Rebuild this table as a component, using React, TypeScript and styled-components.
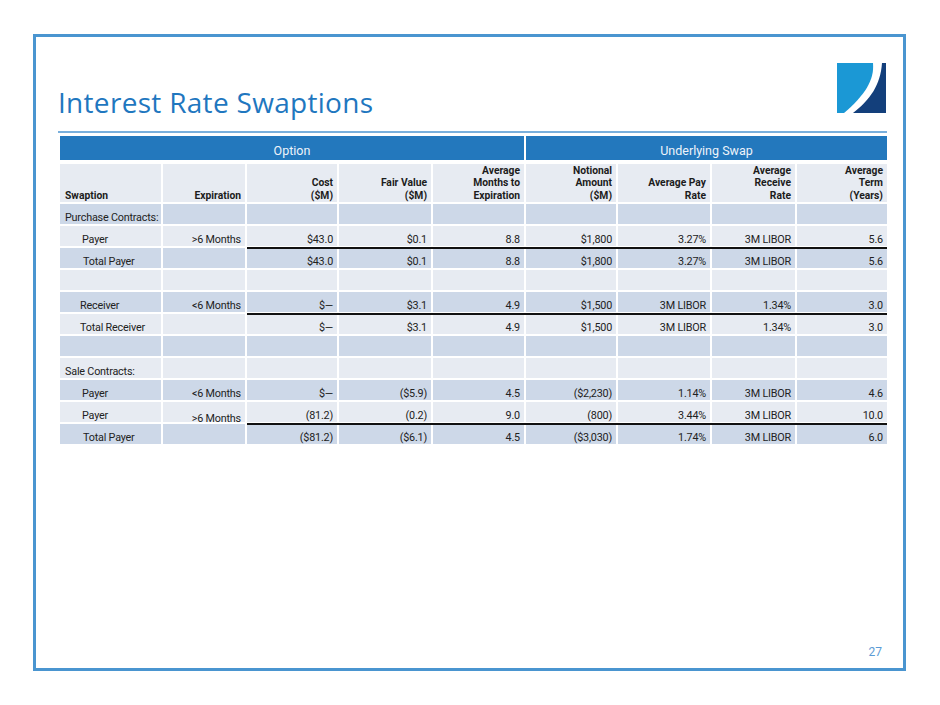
import React from "react";
import styled, { createGlobalStyle } from "styled-components";

const Global = createGlobalStyle`
  html, body { margin: 0; padding: 0; background: #ffffff; }
  body { font-family: Roboto, "Liberation Sans", sans-serif; }
`;

const Frame = styled.div`
  box-sizing: border-box;
  margin: 34px 0 0 33px;
  width: 873px;
  height: 637px;
  border: 3px solid #4a95d0;
  display: flex;
  flex-direction: column;
`;

const Content = styled.div`
  padding: 0 16px 0 22px;
  display: flex;
  flex-direction: column;
`;

const Header = styled.div`
  box-sizing: border-box;
  height: 96px;
  padding: 0 1px 15px 0;
  border-bottom: 2px solid #79afdc;
  display: flex;
  align-items: flex-end;
  justify-content: space-between;
`;

const Title = styled.h1`
  margin: 0;
  font-family: "Open Sans", "Liberation Sans", sans-serif;
  font-weight: 400;
  font-size: 28px;
  letter-spacing: 0.3px;
  line-height: 28px;
  color: #1f77bf;
`;

const LogoBox = styled.svg`
  display: block;
  width: 50px;
  height: 51px;
  margin-bottom: 3px;
`;

const Table = styled.div`
  margin: 3px 0 0 2px;
  display: grid;
  grid-template-columns: 101px 82px 90px 92px 91px 90px 92px 83px 90px;
  column-gap: 2px;
  row-gap: 2px;
`;

const BandCell = styled.div<{ $from: number; $to: number }>`
  grid-column: ${(p) => p.$from} / ${(p) => p.$to};
  height: 24px;
  margin-bottom: 2px;
  background: #2378bd;
  color: #eef3fa;
  font-size: 12.5px;
  line-height: 14px;
  display: flex;
  align-items: flex-end;
  justify-content: center;
  padding-bottom: 2px;
  box-sizing: border-box;
`;

const HeadCell = styled.div<{ $left?: boolean }>`
  height: 38px;
  box-sizing: border-box;
  background: #e7ebf2;
  color: #1c1c1c;
  font-weight: 700;
  font-size: 10.3px;
  line-height: 12.3px;
  display: flex;
  flex-direction: column;
  justify-content: flex-end;
  text-align: ${(p) => (p.$left ? "left" : "right")};
  padding: 0 4px 0 ${(p) => (p.$left ? "5px" : "0")};
`;

const Cell = styled.div<{ $dark: boolean; $left?: boolean; $indent?: number; $rule?: boolean; $last?: boolean }>`
  position: relative;
  height: 20px;
  box-sizing: border-box;
  background: ${(p) => (p.$dark ? "#cdd8e8" : "#e7ebf2")};
  color: #222222;
  font-size: 10.8px;
  letter-spacing: -0.2px;
  line-height: 13px;
  white-space: nowrap;
  display: flex;
  align-items: flex-end;
  justify-content: ${(p) => (p.$left ? "flex-start" : "flex-end")};
  padding: 0 4px 0 ${(p) => (p.$left ? 5 + (p.$indent || 0) : 0)}px;
  ${(p) =>
    p.$rule
      ? `&::after {
    content: "";
    position: absolute;
    left: 0;
    right: ${p.$last ? 0 : -2}px;
    bottom: -3px;
    height: 2px;
    background: #111;
    z-index: 1;
  }`
      : ""}
`;

const Drop = styled.span`
  margin-bottom: -3px;
`;

const Footer = styled.div`
  margin-top: auto;
  text-align: right;
  padding: 0 21px 9px 0;
  font-size: 12px;
  line-height: 14px;
  color: #5b9bd5;
`;

type Row = {
  label: string;
  indent?: number;
  exp?: string;
  drop?: boolean;
  vals?: string[];
  rule?: boolean;
};

const rows: Row[] = [
  { label: "Purchase Contracts:" },
  { label: "Payer", indent: 17, exp: ">6 Months", vals: ["$43.0", "$0.1", "8.8", "$1,800", "3.27%", "3M LIBOR", "5.6"], rule: true },
  { label: "Total Payer", indent: 18, vals: ["$43.0", "$0.1", "8.8", "$1,800", "3.27%", "3M LIBOR", "5.6"] },
  { label: "" },
  { label: "Receiver", indent: 15, exp: "<6 Months", vals: ["$—", "$3.1", "4.9", "$1,500", "3M LIBOR", "1.34%", "3.0"], rule: true },
  { label: "Total Receiver", indent: 15, vals: ["$—", "$3.1", "4.9", "$1,500", "3M LIBOR", "1.34%", "3.0"] },
  { label: "" },
  { label: "Sale Contracts:" },
  { label: "Payer", indent: 17, exp: "<6 Months", vals: ["$—", "($5.9)", "4.5", "($2,230)", "1.14%", "3M LIBOR", "4.6"] },
  { label: "Payer", indent: 17, exp: ">6 Months", drop: true, vals: ["(81.2)", "(0.2)", "9.0", "(800)", "3.44%", "3M LIBOR", "10.0"], rule: true },
  { label: "Total Payer", indent: 18, vals: ["($81.2)", "($6.1)", "4.5", "($3,030)", "1.74%", "3M LIBOR", "6.0"] },
];

const heads: string[][] = [
  ["Cost", "($M)"],
  ["Fair Value", "($M)"],
  ["Average", "Months to", "Expiration"],
  ["Notional", "Amount", "($M)"],
  ["Average Pay", "Rate"],
  ["Average", "Receive", "Rate"],
  ["Average", "Term", "(Years)"],
];

const Logo = () => (
  <LogoBox viewBox="0 0 50 51">
    <path d="M1 1 L37 1 C38.5 18 29 33 8 51 L1 51 Z" fill="#1b98d5" />
    <path d="M46 1 L50 1 L50 51 L17 51 C34 38 44.5 23 46 1 Z" fill="#133f7b" />
  </LogoBox>
);

export default function App() {
  return (
    <>
      <Global />
      <Frame>
        <Content>
          <Header>
            <Title>Interest Rate Swaptions</Title>
            <Logo />
          </Header>
          <Table>
            <BandCell $from={1} $to={6}>Option</BandCell>
            <BandCell $from={6} $to={10}>Underlying Swap</BandCell>
            <HeadCell $left>Swaption</HeadCell>
            <HeadCell>Expiration</HeadCell>
            {heads.map((h, i) => (
              <HeadCell key={i}>
                {h.map((l, j) => (
                  <div key={j}>{l}</div>
                ))}
              </HeadCell>
            ))}
            {rows.map((r, i) => {
              const dark = i % 2 === 0;
              const vals = r.vals || ["", "", "", "", "", "", ""];
              return (
                <React.Fragment key={i}>
                  <Cell $dark={dark} $left $indent={r.indent}>
                    {r.label}
                  </Cell>
                  <Cell $dark={dark}>{r.drop ? <Drop>{r.exp}</Drop> : r.exp || ""}</Cell>
                  {vals.map((v, j) => (
                    <Cell key={j} $dark={dark} $rule={r.rule} $last={j === vals.length - 1}>
                      {v}
                    </Cell>
                  ))}
                </React.Fragment>
              );
            })}
          </Table>
        </Content>
        <Footer>27</Footer>
      </Frame>
    </>
  );
}
